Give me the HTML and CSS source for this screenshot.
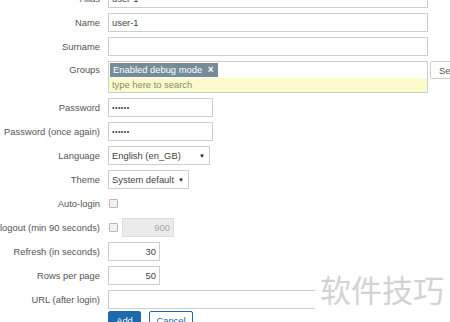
FILE: index.html
```html
<!DOCTYPE html>
<html lang="en">
<head>
    <meta charset="UTF-8">
    <meta name="viewport" content="width=device-width, initial-scale=1.0">
    <title>User</title>
    <link rel="stylesheet" href="styles.css">
</head>
<body>
    <form class="user-form">
        <div class="row">
            <label class="label">Alias</label>
            <div class="field"><input class="text wide" type="text" value="user-1"></div>
        </div>
        <div class="row">
            <label class="label">Name</label>
            <div class="field"><input class="text wide" type="text" value="user-1"></div>
        </div>
        <div class="row">
            <label class="label">Surname</label>
            <div class="field"><input class="text wide" type="text" value=""></div>
        </div>
        <div class="row row-groups">
            <label class="label label-top">Groups</label>
            <div class="field field-top">
                <div class="multiselect">
                    <div class="tags">
                        <span class="tag">Enabled debug mode <b class="tag-remove">&times;</b></span>
                    </div>
                    <div class="search">type here to search</div>
                </div>
                <button type="button" class="btn-select">Select</button>
            </div>
        </div>
        <div class="row">
            <label class="label">Password</label>
            <div class="field"><input class="text pass" type="password" value="123456"></div>
        </div>
        <div class="row">
            <label class="label">Password (once again)</label>
            <div class="field"><input class="text pass" type="password" value="123456"></div>
        </div>
        <div class="row">
            <label class="label">Language</label>
            <div class="field">
                <div class="select select-lang"><span>English (en_GB)</span><span class="arrow">&#9660;</span></div>
            </div>
        </div>
        <div class="row">
            <label class="label">Theme</label>
            <div class="field">
                <div class="select select-theme"><span>System default</span><span class="arrow">&#9660;</span></div>
            </div>
        </div>
        <div class="row">
            <label class="label">Auto-login</label>
            <div class="field"><input class="check" type="checkbox"></div>
        </div>
        <div class="row">
            <label class="label">Auto-logout (min 90 seconds)</label>
            <div class="field">
                <input class="check" type="checkbox">
                <input class="text num disabled" type="text" value="900" disabled>
            </div>
        </div>
        <div class="row">
            <label class="label">Refresh (in seconds)</label>
            <div class="field"><input class="text num" type="text" value="30"></div>
        </div>
        <div class="row">
            <label class="label">Rows per page</label>
            <div class="field"><input class="text num" type="text" value="50"></div>
        </div>
        <div class="row">
            <label class="label">URL (after login)</label>
            <div class="field"><input class="text wide" type="text" value=""></div>
        </div>
        <div class="row row-buttons">
            <span class="label"></span>
            <div class="field buttons">
                <button type="submit" class="btn btn-add">Add</button>
                <button type="button" class="btn btn-cancel">Cancel</button>
            </div>
        </div>
    </form>

    <div class="watermark">软件技巧</div>
</body>
</html>
```

FILE: styles.css
```css
body {
    margin: 0;
    background: #ffffff;
    font-family: "Liberation Sans", Arial, sans-serif;
    font-size: 9.4px;
    color: #555555;
    overflow: hidden;
    position: relative;
    height: 322px;
}

.user-form {
    display: flex;
    flex-direction: column;
    gap: 5px;
    margin-top: -11px;
}

.row {
    display: grid;
    grid-template-columns: 100px auto;
    column-gap: 8px;
    align-items: center;
    min-height: 19px;
}

.row-buttons {
    margin-top: -3px;
}

.label {
    display: flex;
    justify-content: flex-end;
    white-space: nowrap;
}

.label-top {
    align-self: start;
    padding-top: 3px;
}

.field {
    display: flex;
    align-items: center;
    gap: 4px;
}

.field-top {
    align-items: flex-start;
    gap: 2px;
}

.text {
    box-sizing: border-box;
    height: 19px;
    margin: 0;
    padding: 0 3px;
    border: 1px solid #cdcdcd;
    background: #ffffff;
    font-family: inherit;
    font-size: 9.4px;
    color: #444444;
    outline: none;
}

.wide {
    width: 320px;
}

.pass {
    width: 105px;
    font-size: 7px;
    letter-spacing: 0.5px;
}

.num {
    width: 52px;
    text-align: right;
}

.disabled {
    background: #ebebeb;
    border-color: #dcdcdc;
    color: #a8a8a8;
}

.multiselect {
    box-sizing: border-box;
    width: 320px;
    height: 32px;
    border: 1px solid #cdcdcd;
    display: flex;
    flex-direction: column;
}

.tags {
    height: 16px;
    padding: 1px 0 0 1px;
    background: #ffffff;
}

.tag {
    display: inline-block;
    height: 14px;
    line-height: 14px;
    padding: 0 4px 0 3px;
    background: #768d99;
    color: #ffffff;
}

.tag-remove {
    margin-left: 3px;
    font-size: 10px;
}

.search {
    flex: 1;
    background: #fbfbcb;
    color: #8a8a74;
    padding-left: 3px;
    line-height: 14px;
}

.btn-select {
    box-sizing: border-box;
    height: 18px;
    margin: 0;
    padding: 0 8px;
    border: 1px solid #cfcfcf;
    border-radius: 2px;
    background: #ffffff;
    font-family: inherit;
    font-size: 9.4px;
    color: #555555;
}

.select {
    box-sizing: border-box;
    height: 19px;
    display: flex;
    justify-content: space-between;
    align-items: center;
    padding: 0 4px 0 3px;
    border: 1px solid #cdcdcd;
    color: #444444;
}

.select-lang {
    width: 102px;
}

.select-theme {
    width: 81px;
}

.arrow {
    font-size: 6px;
    color: #222222;
}

.check {
    appearance: none;
    box-sizing: border-box;
    width: 9px;
    height: 9px;
    margin: 0 0 0 1px;
    border: 1px solid #b9b9b9;
    border-radius: 1px;
    background: #f2f2f2;
}

.buttons {
    gap: 8px;
}

.btn {
    box-sizing: border-box;
    height: 19px;
    margin: 0;
    padding: 0;
    border: 1px solid #1e68ad;
    border-radius: 2px;
    font-family: inherit;
    font-size: 9.4px;
}

.btn-add {
    width: 33px;
    background: #1e68ad;
    color: #ffffff;
}

.btn-cancel {
    width: 44px;
    background: #ffffff;
    color: #1e68ad;
}

.watermark {
    position: absolute;
    top: 266px;
    left: 315px;
    height: 46px;
    padding-left: 5px;
    padding-right: 10px;
    white-space: nowrap;
    background: #ffffff;
    font-family: "Noto Sans CJK SC", sans-serif;
    font-size: 31px;
    line-height: 46px;
    color: #d3d3d3;
}
```
